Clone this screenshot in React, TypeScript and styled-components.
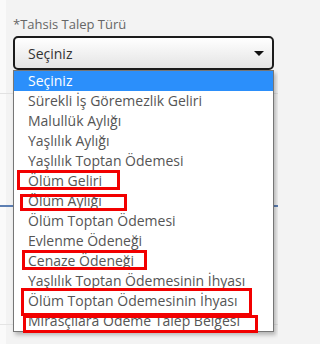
import React from 'react'
import styled, { createGlobalStyle } from 'styled-components'

const GlobalStyle = createGlobalStyle`
  html, body {
    margin: 0;
    padding: 0;
    background: #f3f3f3;
  }
  body {
    font-family: 'Open Sans', 'Noto Sans', sans-serif;
  }
`

const Page = styled.div`
  position: relative;
  display: flex;
  width: 278px;
  height: 344px;
  overflow: hidden;
`

const Strip = styled.div`
  width: 6px;
  background: #fafafa;
`

const Panel = styled.div`
  flex: 1;
  padding: 14px 4px 0 7px;
  background: #f3f3f3;
`

const Label = styled.div`
  font-size: 13px;
  line-height: 20px;
  color: #666;
  margin-bottom: 2px;
`

const SelectWrap = styled.div`
  position: relative;
  width: 261px;
  z-index: 2;
`

const SelectBox = styled.div`
  box-sizing: border-box;
  display: flex;
  align-items: center;
  justify-content: space-between;
  height: 34px;
  padding: 0 8px 0 13px;
  border: 2px solid #1c1c1c;
  border-radius: 5px;
  background: linear-gradient(#ffffff, #e4e4e4);
  font-size: 14px;
  color: #333;
`

const Caret = styled.span`
  width: 0;
  height: 0;
  border-left: 5px solid transparent;
  border-right: 5px solid transparent;
  border-top: 5px solid #111;
`

const OptionList = styled.ul`
  position: absolute;
  top: 34px;
  left: 0;
  box-sizing: border-box;
  width: 261px;
  margin: 0;
  padding: 0;
  list-style: none;
  background: #fff;
  border: 1px solid #767676;
  box-shadow: 2px 3px 4px rgba(0, 0, 0, 0.25);
`

const Option = styled.li<{ $selected?: boolean }>`
  height: 20px;
  line-height: 20px;
  padding-left: 14px;
  font-size: 14px;
  white-space: nowrap;
  color: ${(p) => (p.$selected ? '#fff' : '#555')};
  background: ${(p) => (p.$selected ? '#2b8ffb' : 'transparent')};
`

const Rule = styled.div<{ $gap: number; $color: string; $size?: number }>`
  margin: ${(p) => p.$gap}px -4px 0 -13px;
  height: ${(p) => p.$size || 1}px;
  background: ${(p) => p.$color};
`

const Mark = styled.div<{ $x: number; $y: number; $w: number; $h: number }>`
  position: absolute;
  left: ${(p) => p.$x}px;
  top: ${(p) => p.$y}px;
  width: ${(p) => p.$w}px;
  height: ${(p) => p.$h}px;
  box-sizing: border-box;
  border: 3px solid #f20000;
  z-index: 5;
  pointer-events: none;
`

const options = [
  'Seçiniz',
  'Sürekli İş Göremezlik Geliri',
  'Malullük Aylığı',
  'Yaşlılık Aylığı',
  'Yaşlılık Toptan Ödemesi',
  'Ölüm Geliri',
  'Ölüm Aylığı',
  'Ölüm Toptan Ödemesi',
  'Evlenme Ödeneği',
  'Cenaze Ödeneği',
  'Yaşlılık Toptan Ödemesinin İhyası',
  'Ölüm Toptan Ödemesinin İhyası',
  'Mirasçılara Ödeme Talep Belgesi',
]

// red highlight boxes drawn over the screenshot
const marks = [
  { x: 17, y: 170, w: 103, h: 20 },
  { x: 20, y: 194, w: 107, h: 17 },
  { x: 22, y: 250, w: 125, h: 20 },
  { x: 21, y: 288, w: 231, h: 28 },
  { x: 23, y: 315, w: 235, h: 18 },
]

const App: React.FC = () => {
  return (
    <>
      <GlobalStyle />
      <Page>
        <Strip />
        <Panel>
          <Label>*Tahsis Talep Türü</Label>
          <SelectWrap>
            <SelectBox>
              <span>Seçiniz</span>
              <Caret />
            </SelectBox>
            <OptionList>
              {options.map((o, i) => (
                <Option key={o} $selected={i === 0}>
                  {o}
                </Option>
              ))}
            </OptionList>
          </SelectWrap>
          <Rule $gap={23} $color="#e2e2e2" />
          <Rule $gap={111} $color="#5d7fb3" $size={2} />
          <Rule $gap={117} $color="#e4e4e4" />
        </Panel>
        {marks.map((m, i) => (
          <Mark key={i} $x={m.x} $y={m.y} $w={m.w} $h={m.h} />
        ))}
      </Page>
    </>
  )
}

export default App
